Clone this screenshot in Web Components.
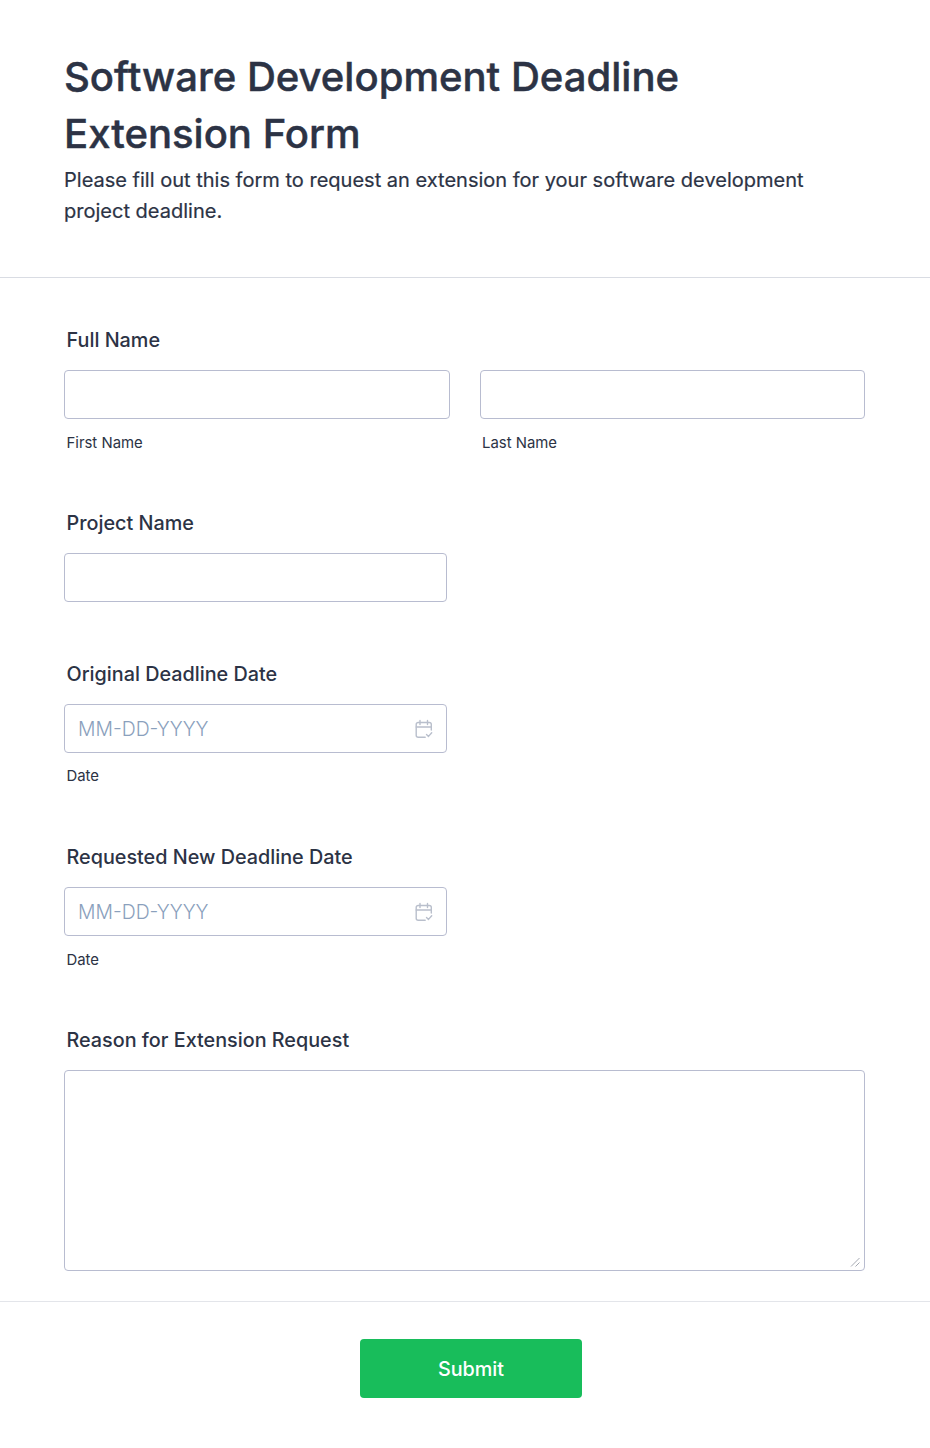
<!DOCTYPE html>
<html lang="en"><head><meta charset="utf-8"><title>Form</title>
<style>
html,body{margin:0;padding:0;background:#fff}
body{font-family:Inter,"Liberation Sans",sans-serif;color:#2c3345;height:1448px;overflow:hidden}
</style></head><body>
<form-page>
  <form-header title-text="Software Development Deadline Extension Form">Please fill out this form to request an extension for your software development project deadline.</form-header>
  <form-field label="Full Name" gap="50">
    <form-row>
      <text-box sub="First Name" width="386"></text-box>
      <text-box sub="Last Name" width="385.5"></text-box>
    </form-row>
  </form-field>
  <form-field label="Project Name" gap="59"><text-box width="383"></text-box></form-field>
  <form-field label="Original Deadline Date" gap="60"><date-box sub="Date" sub-gap="14"></date-box></form-field>
  <form-field label="Requested New Deadline Date" gap="60"><date-box sub="Date" sub-gap="15"></date-box></form-field>
  <form-field label="Reason for Extension Request" gap="59"><area-box></area-box></form-field>
  <form-footer>Submit</form-footer>
</form-page>
<script>
function def(name, css, html){
  customElements.define(name, class extends HTMLElement{
    connectedCallback(){
      if(this.shadowRoot) return;
      const r=this.attachShadow({mode:'open'});
      r.innerHTML='<style>'+css+'</style>'+(typeof html==='function'?html(this):html);
    }
  });
}
const esc=s=>(s||'').replace(/&/g,'&amp;').replace(/</g,'&lt;');
const subCss='.sub{display:block;font-size:14.9px;line-height:18px;color:#2c3345;margin:15px 0 0 2.5px}';
const boxCss='.box{box-sizing:border-box;height:49px;border:1px solid #b8bcd0;border-radius:4px;background:#fff}';

def('form-page',':host{display:block;width:930px}','<slot></slot>');

def('form-header',
 ':host{display:block;box-sizing:border-box;height:278px;padding:48px 64px 0;border-bottom:1px solid #d9dce3}'+
 'h1{margin:0;font-size:40.05px;line-height:57px;font-weight:500;-webkit-text-stroke:.45px #2c3345;color:#2c3345;max-width:720px}'+
 'p{margin:3px 0 0;font-size:20.03px;line-height:31px;font-weight:400;-webkit-text-stroke:.2px #2c3345;color:#2c3345;max-width:760px}',
 e=>'<h1>'+esc(e.getAttribute('title-text'))+'</h1><p><slot></slot></p>');

def('form-row',':host{display:grid;grid-template-columns:386px 385.5px;column-gap:29.5px;width:801px}','<slot></slot>');

def('form-field',
 ':host{display:block;padding:0 64px}'+
 '.lab{font-size:19.8px;line-height:24px;font-weight:500;color:#2c3345;margin:0 0 18px 2.5px}',
 e=>{e.style.marginTop=e.getAttribute('gap')+'px';return '<div class="lab">'+esc(e.getAttribute('label'))+'</div><slot></slot>';});

def('text-box',
 ':host{display:block}'+boxCss+subCss,
 e=>{const w=e.getAttribute('width');const s=e.getAttribute('sub');
   return '<div class="box" style="width:'+w+'px"></div>'+(s?'<span class="sub">'+esc(s)+'</span>':'');});

def('date-box',
 ':host{display:block}'+boxCss+subCss+
 '.box{width:383px;display:flex;align-items:center;justify-content:space-between;padding:0 13px}'+
 '.ph{font-size:19.4px;line-height:24px;color:#8aa0bc;font-weight:300}'+
 'svg{display:block;width:18px;height:20px}',
 e=>'<div class="box"><span class="ph">MM-DD-YYYY</span>'+
 '<svg viewBox="0 0 18 20" fill="none" stroke="#b9bfcc" stroke-width="1.4" stroke-linecap="round" stroke-linejoin="round">'+
 '<path d="M16.3 11V5.5a2 2 0 0 0-2-2H3.2a2 2 0 0 0-2 2v10.8a2 2 0 0 0 2 2h7"/><path d="M1.2 8h15.1"/><path d="M5 1.5v4M12.5 1.5v4"/><path d="M11.5 15.4l2 2 3.2-3.6"/></svg></div>'+
 '<span class="sub" style="margin-top:'+e.getAttribute('sub-gap')+'px">'+esc(e.getAttribute('sub'))+'</span>');

def('area-box',
 ':host{display:block}'+boxCss+
 '.box{position:relative;width:801px;height:201px}'+
 'svg{position:absolute;right:4px;bottom:3px;width:10px;height:10px}',
 '<div class="box"><svg viewBox="0 0 10 10" stroke="#a5a9b2" stroke-width="1" fill="none"><path d="M1 9.5L9.5 1M5.5 9.5L9.5 5.5"/></svg></div>');

def('form-footer',
 ':host{display:block;border-top:1px solid #e3e5ea;margin-top:30px;padding-top:37px}'+
 '.wrap{display:flex;padding-left:360px}'+
 'button{width:222px;height:59px;border:0;border-radius:4px;background:#18bd5b;color:#fff;font:500 19.8px Inter,"Liberation Sans",sans-serif;padding:0}',
 '<div class="wrap"><button type="button"><slot></slot></button></div>');
</script>
</body></html>
